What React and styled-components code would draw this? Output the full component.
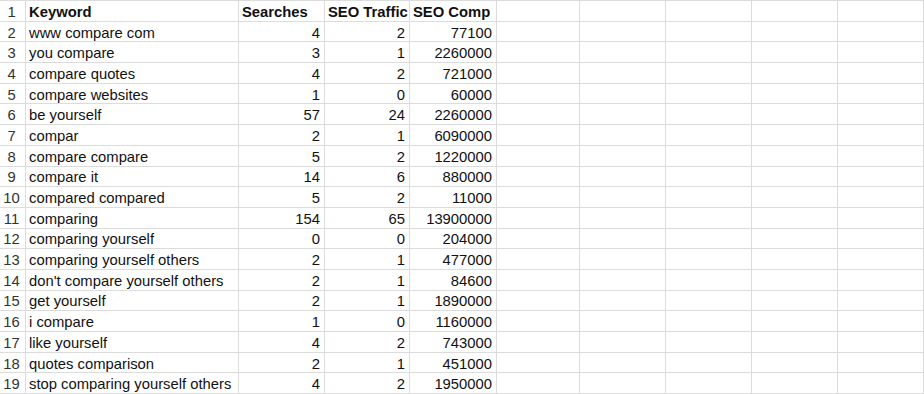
import styled, { createGlobalStyle } from "styled-components";

const rows = [
  ["www compare com", 4, 2, 77100],
  ["you compare", 3, 1, 2260000],
  ["compare quotes", 4, 2, 721000],
  ["compare websites", 1, 0, 60000],
  ["be yourself", 57, 24, 2260000],
  ["compar", 2, 1, 6090000],
  ["compare compare", 5, 2, 1220000],
  ["compare it", 14, 6, 880000],
  ["compared compared", 5, 2, 11000],
  ["comparing", 154, 65, 13900000],
  ["comparing yourself", 0, 0, 204000],
  ["comparing yourself others", 2, 1, 477000],
  ["don't compare yourself others", 2, 1, 84600],
  ["get yourself", 2, 1, 1890000],
  ["i compare", 1, 0, 1160000],
  ["like yourself", 4, 2, 743000],
  ["quotes comparison", 2, 1, 451000],
  ["stop comparing yourself others", 4, 2, 1950000],
];

const EMPTY_COLS = 5;

const GlobalStyle = createGlobalStyle`
  html, body {
    margin: 0;
    padding: 0;
    background: #ffffff;
    overflow: hidden;
  }
`;

const Sheet = styled.div`
  display: grid;
  grid-template-columns: 26px 213px 86px 85px 87px 83px 86px 86px 86px 86px;
  grid-auto-rows: 20.7px;
  width: 924px;
  border-top: 1px solid #dcdcdc;
  font-family: "Liberation Sans", Arial, sans-serif;
  font-size: 14.8px;
  color: #111111;
`;

const Cell = styled.div`
  display: flex;
  align-items: center;
  justify-content: ${(p) => (p.$num ? "flex-end" : "flex-start")};
  padding: ${(p) => (p.$num ? "2px 4px 0 0" : "2px 0 0 3px")};
  border-right: 1px solid #dcdcdc;
  border-bottom: 1px solid #dcdcdc;
  font-weight: ${(p) => (p.$head ? 700 : 400)};
  white-space: nowrap;
  overflow: hidden;
  box-sizing: border-box;
`;

const RowNum = styled(Cell)`
  justify-content: center;
  padding: 2px 2px 0 0;
  color: #333333;
  font-weight: 400;
`;

function Blanks() {
  return Array.from({ length: EMPTY_COLS }, (_, i) => <Cell key={"b" + i} />);
}

export default function App() {
  return (
    <>
      <GlobalStyle />
      <Sheet>
        <RowNum>1</RowNum>
        <Cell $head>Keyword</Cell>
        <Cell $head>Searches</Cell>
        <Cell $head>SEO Traffic</Cell>
        <Cell $head>SEO Comp</Cell>
        <Blanks />
        {rows.map((r, i) => (
          <Row key={i} n={i + 2} data={r} />
        ))}
      </Sheet>
    </>
  );
}

function Row({ n, data }) {
  const [kw, searches, traffic, comp] = data;
  return (
    <>
      <RowNum>{n}</RowNum>
      <Cell>{kw}</Cell>
      <Cell $num>{searches}</Cell>
      <Cell $num>{traffic}</Cell>
      <Cell $num>{comp}</Cell>
      <Blanks />
    </>
  );
}
